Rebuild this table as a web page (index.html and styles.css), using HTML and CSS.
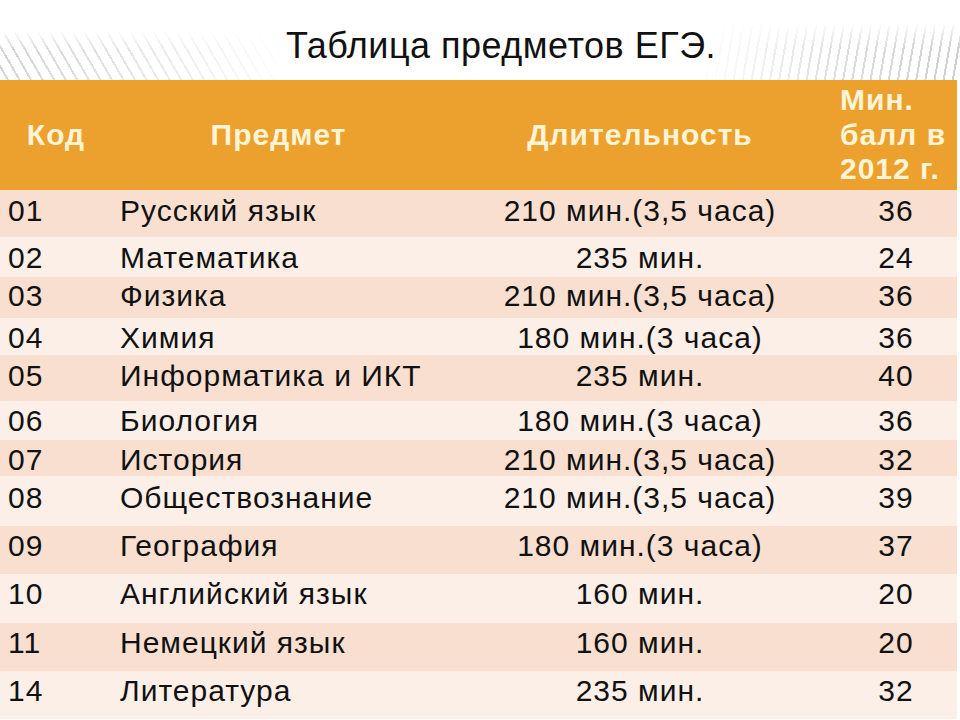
FILE: index.html
```html
<!DOCTYPE html>
<html lang="ru">
<head>
<meta charset="utf-8">
<title>Таблица предметов ЕГЭ</title>
<link rel="stylesheet" href="styles.css">
</head>
<body>
<div class="slide">
  <div class="title-bar">
    <h1 class="title">Таблица предметов ЕГЭ.</h1>
  </div>
  <table class="exams">
    <colgroup>
      <col class="c-code">
      <col class="c-subj">
      <col class="c-dur">
      <col class="c-score">
    </colgroup>
    <thead>
      <tr class="head">
        <th class="h-code">Код</th>
        <th class="h-subj">Предмет</th>
        <th class="h-dur">Длительность</th>
        <th class="h-score">Мин.<br>балл в<br>2012 г.</th>
      </tr>
    </thead>
    <tbody>
      <tr class="r1 dark"><td class="code">01</td><td class="subj">Русский язык</td><td class="dur">210 мин.(3,5 часа)</td><td class="score">36</td></tr>
      <tr class="r2 light"><td class="code">02</td><td class="subj">Математика</td><td class="dur">235 мин.</td><td class="score">24</td></tr>
      <tr class="r3 dark"><td class="code">03</td><td class="subj">Физика</td><td class="dur">210 мин.(3,5 часа)</td><td class="score">36</td></tr>
      <tr class="r4 light"><td class="code">04</td><td class="subj">Химия</td><td class="dur">180 мин.(3 часа)</td><td class="score">36</td></tr>
      <tr class="r5 dark"><td class="code">05</td><td class="subj">Информатика и ИКТ</td><td class="dur">235 мин.</td><td class="score">40</td></tr>
      <tr class="r6 light"><td class="code">06</td><td class="subj">Биология</td><td class="dur">180 мин.(3 часа)</td><td class="score">36</td></tr>
      <tr class="r7 dark"><td class="code">07</td><td class="subj">История</td><td class="dur">210 мин.(3,5 часа)</td><td class="score">32</td></tr>
      <tr class="r8 light"><td class="code">08</td><td class="subj">Обществознание</td><td class="dur">210 мин.(3,5 часа)</td><td class="score">39</td></tr>
      <tr class="r9 dark"><td class="code">09</td><td class="subj">География</td><td class="dur">180 мин.(3 часа)</td><td class="score">37</td></tr>
      <tr class="r10 light"><td class="code">10</td><td class="subj">Английский язык</td><td class="dur">160 мин.</td><td class="score">20</td></tr>
      <tr class="r11 dark"><td class="code">11</td><td class="subj">Немецкий язык</td><td class="dur">160 мин.</td><td class="score">20</td></tr>
      <tr class="r12 light"><td class="code">14</td><td class="subj">Литература</td><td class="dur">235 мин.</td><td class="score">32</td></tr>
    </tbody>
  </table>
</div>
</body>
</html>
```

FILE: styles.css
```css
html, body {
  margin: 0;
  padding: 0;
  background: #ffffff;
}

.slide {
  width: 960px;
  height: 720px;
  overflow: hidden;
  font-family: "Liberation Sans", Arial, sans-serif;
  color: #111111;
}

.title-bar {
  position: relative;
  height: 80px;
  box-sizing: border-box;
  padding: 26px 0 0 42px;
}

.title-bar::before,
.title-bar::after {
  content: "";
  position: absolute;
  bottom: 0;
  pointer-events: none;
}

.title-bar::before {
  left: 0;
  width: 290px;
  height: 50px;
  background: repeating-linear-gradient(60deg, transparent 0 6px, #d4d4d4 6px 8px, transparent 8px 10px);
  -webkit-mask-image: linear-gradient(to right, #000, rgba(0,0,0,0.55) 50%, transparent), linear-gradient(to bottom, transparent, #000 40%);
  -webkit-mask-composite: source-in;
  mask-image: linear-gradient(to right, #000, rgba(0,0,0,0.55) 50%, transparent), linear-gradient(to bottom, transparent, #000 40%);
  mask-composite: intersect;
}

.title-bar::after {
  right: 0;
  width: 260px;
  height: 58px;
  background: repeating-linear-gradient(100deg, transparent 0 6px, #cfcfcf 6px 8px, transparent 8px 9px);
  -webkit-mask-image: linear-gradient(to left, #000, rgba(0,0,0,0.65) 50%, transparent), linear-gradient(to bottom, transparent, #000 45%);
  -webkit-mask-composite: source-in;
  mask-image: linear-gradient(to left, #000, rgba(0,0,0,0.65) 50%, transparent), linear-gradient(to bottom, transparent, #000 45%);
  mask-composite: intersect;
}

.title {
  position: relative;
  z-index: 1;
  margin: 0;
  font-weight: normal;
  font-size: 36px;
  line-height: 40px;
  letter-spacing: 0.5px;
  text-align: center;
  color: #111111;
}

.exams {
  width: 957px;
  border-collapse: collapse;
  table-layout: fixed;
  font-size: 30px;
  line-height: 32px;
  letter-spacing: 1px;
}

.c-code { width: 112px; }
.c-subj { width: 333px; }
.c-dur { width: 390px; }
.c-score { width: 122px; }

.head {
  height: 110px;
  background: #eca12f;
}

.head th {
  padding: 0;
  font-weight: bold;
  color: #fff4d6;
  text-align: center;
  vertical-align: middle;
}

.head .h-score {
  text-align: left;
  padding-left: 5px;
  line-height: 34.5px;
}

.exams td {
  padding: 4px 0 0 0;
  vertical-align: top;
  white-space: nowrap;
}

.dark { background: #f9dfcf; }
.light { background: #fcefe7; }

.code { padding-left: 8px !important; }
.subj { padding-left: 8px !important; }
.dur { text-align: center; }
.score { text-align: center; }

.r1 { height: 47px; }
.r2 { height: 40px; }
.r3 { height: 41px; }
.r4 { height: 37px; }
.r5 { height: 46px; }
.r6 { height: 39px; }
.r7 { height: 35px; }
.r8 { height: 50px; }
.r9 { height: 48px; }
.r10 { height: 49px; }
.r11 { height: 48px; }
.r12 { height: 48px; }

.r1 td { padding-top: 5px; }
.r2 td { padding-top: 5px; }
.r3 td { padding-top: 3px; }
.r5 td { padding-top: 5px; }
.r8 td { padding-top: 6px; }
```
